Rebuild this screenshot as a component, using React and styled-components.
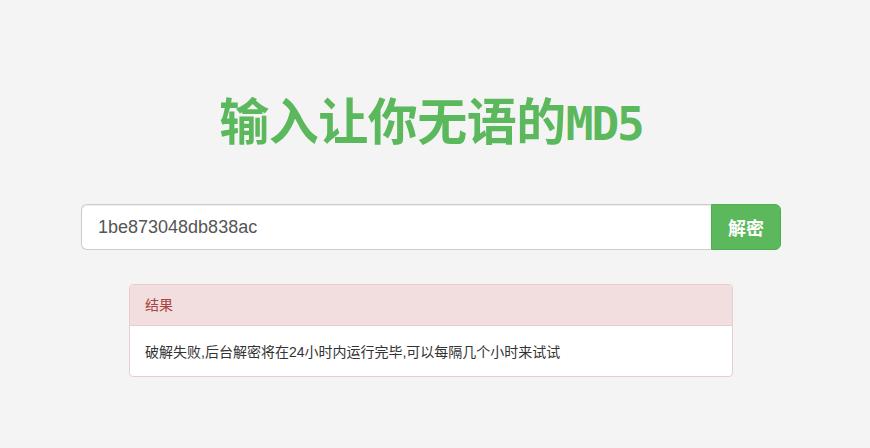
import React from "react";
import styled, { createGlobalStyle } from "styled-components";

const GlobalStyle = createGlobalStyle`
  html, body {
    margin: 0;
    padding: 0;
    background: #f4f4f4;
  }
  body {
    font-family: "Helvetica Neue", "Liberation Sans", Arial, "Noto Sans CJK SC", sans-serif;
    font-size: 14px;
    color: #333;
  }
`;

const Page = styled.div`
  width: 862px;
  padding-top: 75px;
  display: flex;
  flex-direction: column;
  align-items: center;
`;

const Title = styled.h1`
  margin: 0;
  height: 89px;
  line-height: 86px;
  font-size: 50px;
  font-weight: 700;
  color: #5cb85c;
  font-family: "Noto Sans CJK SC", sans-serif;
  letter-spacing: -0.5px;
`;

const Mono = styled.span`
  font-family: "DejaVu Sans Mono", monospace;
  font-size: 46px;
  letter-spacing: -2px;
`;

const InputGroup = styled.form`
  margin-top: 40px;
  width: 700px;
  display: flex;
`;

const Input = styled.input`
  flex: 1;
  height: 46px;
  box-sizing: border-box;
  padding: 0 16px;
  font-size: 18px;
  color: #555;
  font-family: "Liberation Sans", Arial, sans-serif;
  background: #fff;
  border: 1px solid #ccc;
  border-right: none;
  border-radius: 6px 0 0 6px;
  box-shadow: inset 0 1px 1px rgba(0, 0, 0, 0.075);
  outline: none;
`;

const Button = styled.button`
  width: 70px;
  height: 46px;
  border: 1px solid #4cae4c;
  border-radius: 0 6px 6px 0;
  background: #5cb85c;
  color: #fff;
  font-size: 18px;
  font-weight: 700;
  font-family: "Noto Sans CJK SC", sans-serif;
  cursor: pointer;
`;

const Panel = styled.div`
  margin-top: 34px;
  width: 604px;
  box-sizing: border-box;
  background: #fff;
  border: 1px solid #ebccd1;
  border-radius: 4px;
  overflow: hidden;
`;

const PanelHeading = styled.div`
  height: 41px;
  box-sizing: border-box;
  padding: 0 15px 2px;
  display: flex;
  align-items: center;
  background: #f2dede;
  color: #a94442;
  border-bottom: 1px solid #ebccd1;
  font-size: 14px;
`;

const PanelBody = styled.div`
  height: 50px;
  padding: 0 15px;
  display: flex;
  align-items: center;
  font-size: 14px;
  color: #333;
`;

export default function App() {
  return (
    <>
      <GlobalStyle />
      <Page>
        <Title>
          输入让你无语的<Mono>MD5</Mono>
        </Title>
        <InputGroup onSubmit={(e) => e.preventDefault()}>
          <Input defaultValue="1be873048db838ac" />
          <Button type="submit">解密</Button>
        </InputGroup>
        <Panel>
          <PanelHeading>结果</PanelHeading>
          <PanelBody>破解失败,后台解密将在24小时内运行完毕,可以每隔几个小时来试试</PanelBody>
        </Panel>
      </Page>
    </>
  );
}
